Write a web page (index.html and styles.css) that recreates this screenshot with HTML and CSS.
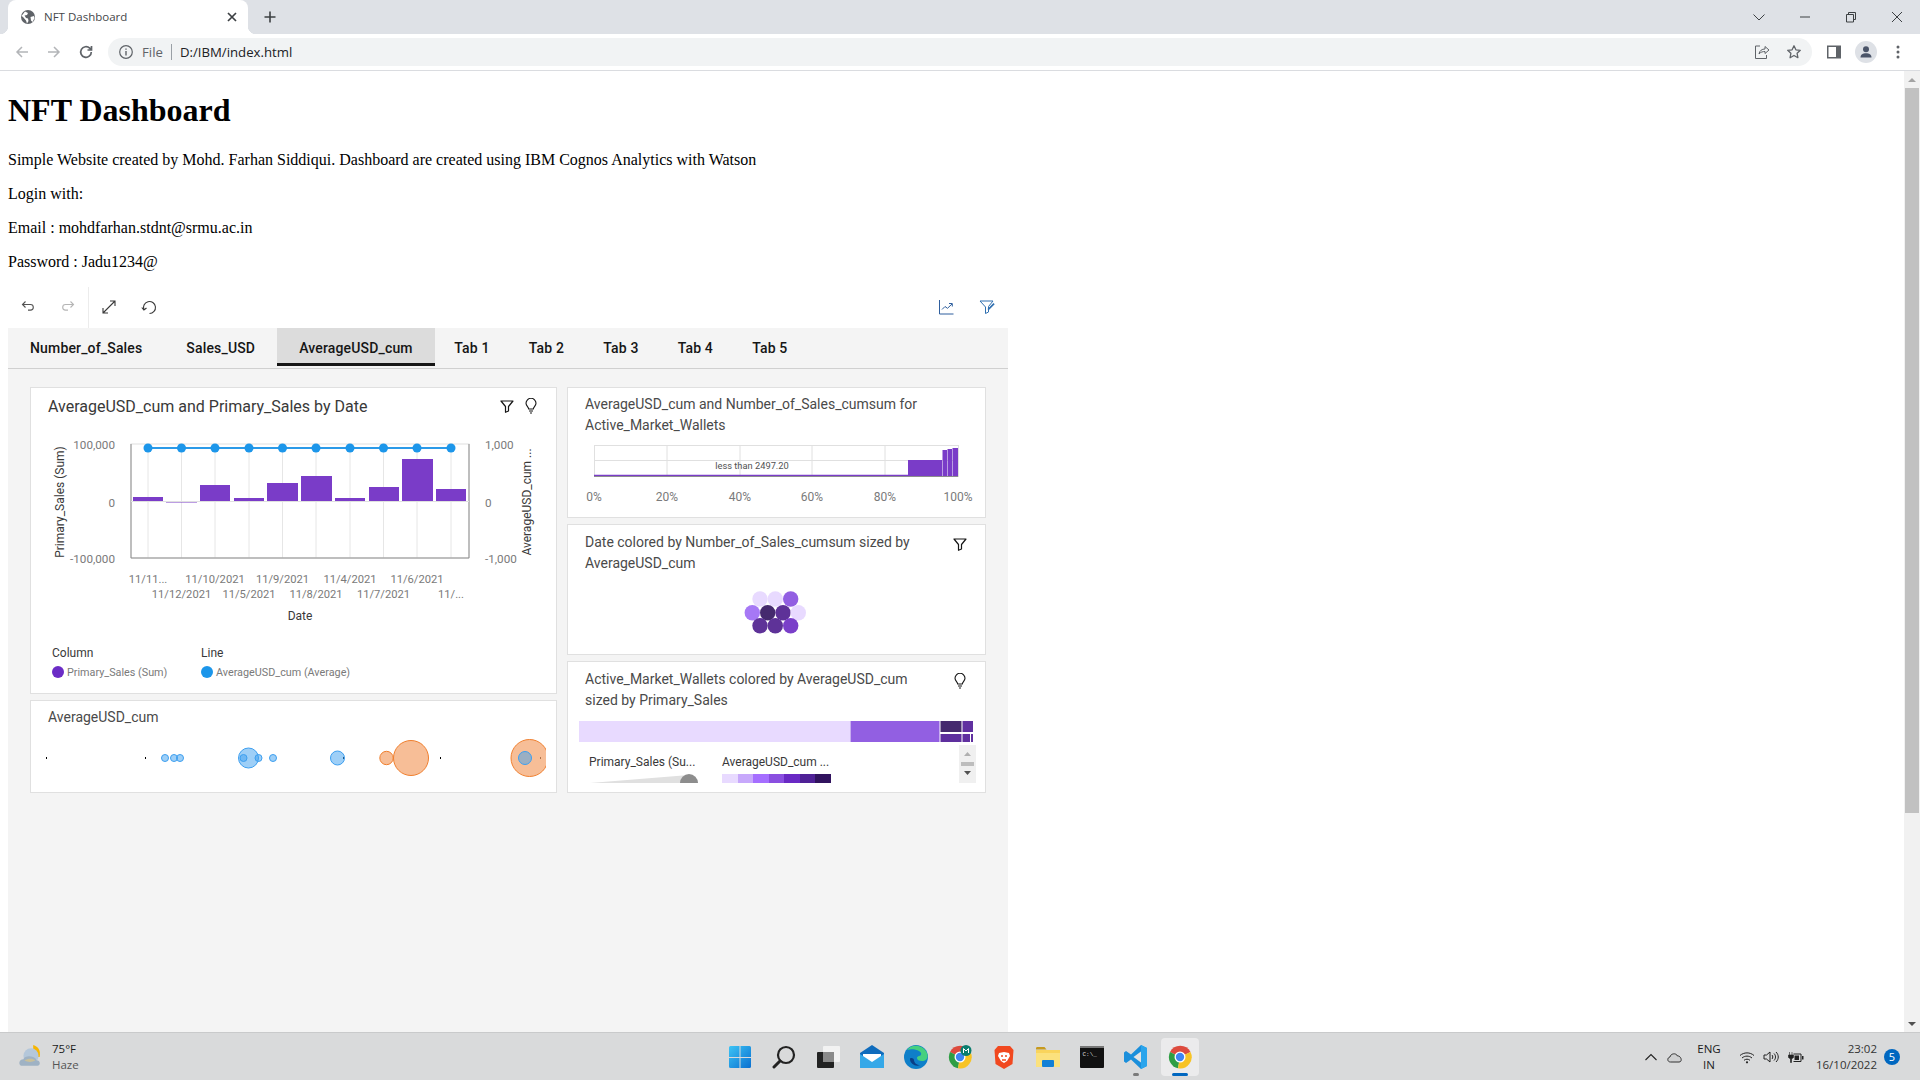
FILE: index.html
```html
<!DOCTYPE html>
<html lang="en">
<head>
    <meta charset="UTF-8">
    <meta name="viewport" content="width=device-width, initial-scale=1.0">
    <title>NFT Dashboard</title>
    <link rel="stylesheet" href="styles.css">
</head>
<body>
    <svg class="defs">
        <symbol id="i-funnel" viewBox="0 0 16 16"><path d="M2 3h12L9.500 8.500v4.500l-3 1.300V8.500z" fill="none" stroke="currentColor" stroke-width="1.200" stroke-linejoin="round"/></symbol>
        <symbol id="i-bulb" viewBox="0 0 16 16"><path d="M5.700 11c0-2-2.700-3-2.700-5.700a5 5 0 0 1 10 0c0 2.700-2.700 3.700-2.700 5.700zM6 13h4M7 15h2" fill="none" stroke="currentColor" stroke-width="1.100"/></symbol>
    </svg>

    <div id="browser">
        <div class="tabstrip">
            <div class="tab">
                <svg class="ic" viewBox="0 0 16 16"><circle cx="8" cy="8" r="7" fill="#5f6368"/><path d="M5 2.500 8 4 7 6 4.500 6.500 6 9l2 .5.500 2.500-1.500 2.500-1-3-3-3.500-1.500-1zM10.500 8l3.500-1 .5 2-2 4-1.500-1.500z" fill="#fff"/></svg>
                <span class="tab-title">NFT Dashboard</span>
                <svg class="ic tab-close" viewBox="0 0 16 16"><path d="M4 4l8 8M12 4l-8 8" stroke="#3c4043" stroke-width="1.700"/></svg>
            </div>
            <svg class="ic new-tab" viewBox="0 0 16 16"><path d="M8 2.500v11M2.500 8h11" stroke="#3c4043" stroke-width="1.600"/></svg>
            <div class="win-controls">
                <span class="win-btn"><svg class="ic" viewBox="0 0 16 16"><path d="M2.500 5.500 8 11l5.500-5.500" fill="none" stroke="#3c4043"/></svg></span>
                <span class="win-btn"><svg class="ic" viewBox="0 0 16 16"><path d="M3 8h10" stroke="#3c4043"/></svg></span>
                <span class="win-btn"><svg class="ic" viewBox="0 0 16 16"><path d="M3.500 5.500h7v7.500h-7zM5.500 5.500V3.500h7v7h-2" fill="none" stroke="#3c4043" stroke-linejoin="round"/></svg></span>
                <span class="win-btn"><svg class="ic" viewBox="0 0 16 16"><path d="M3 3l10 10M13 3 3 13" stroke="#3c4043"/></svg></span>
            </div>
        </div>

        <div class="toolbar">
            <span class="tool-btn"><svg class="ic" viewBox="0 0 16 16"><path d="M14 8H3M8 3 3 8l5 5" fill="none" stroke="#b3b5b8" stroke-width="1.500"/></svg></span>
            <span class="tool-btn"><svg class="ic" viewBox="0 0 16 16"><path d="M2 8h11M8 3l5 5-5 5" fill="none" stroke="#b3b5b8" stroke-width="1.500"/></svg></span>
            <span class="tool-btn"><svg class="ic" viewBox="0 0 16 16"><path d="M13.300 8a5.300 5.300 0 1 1-1.600-3.800L13.500 6M13.500 2v4h-4" fill="none" stroke="#5f6368" stroke-width="1.700"/></svg></span>
            <div class="omnibox">
                <svg class="ic" viewBox="0 0 16 16"><circle cx="8" cy="8" r="6.300" fill="none" stroke="#5f6368" stroke-width="1.200"/><path d="M8 7v4.500M8 4.500v1.300" stroke="#5f6368" stroke-width="1.400"/></svg>
                <span class="scheme">File</span>
                <span class="url">D:/IBM/index.html</span>
                <span class="omni-icons">
                    <span class="tool-btn"><svg class="ic" viewBox="0 0 16 16"><path d="M6 2H1.500v12.500h11V11M5 10c.5-3.500 3-5 6-5V2.500L15 6l-4 3.500V7.500C9 7.500 6.500 8 5 10z" fill="none" stroke="#5f6368"/></svg></span>
                    <span class="tool-btn"><svg class="ic" viewBox="0 0 16 16"><path d="M8 1.800l1.900 4 4.400.5-3.200 3 .8 4.400L8 11.500l-3.900 2.200.8-4.400-3.200-3 4.400-.5z" fill="none" stroke="#5f6368" stroke-width="1.300" stroke-linejoin="round"/></svg></span>
                </span>
            </div>
            <span class="tool-btn"><svg class="ic" viewBox="0 0 16 16"><path d="M1 1.500h14v13H1z" fill="#5f6368"/><path d="M2.500 3h7.500v10H2.500z" fill="#fff"/></svg></span>
            <span class="tool-btn"><span class="avatar"><svg class="ic" viewBox="0 0 16 16"><circle cx="8" cy="5.200" r="3" fill="#4a5468"/><path d="M2.500 13.500c0-3 2.500-4.300 5.500-4.300s5.500 1.300 5.500 4.300z" fill="#4a5468"/></svg></span></span>
            <span class="tool-btn"><svg class="ic" viewBox="0 0 16 16"><circle cx="8" cy="3" r="1.500" fill="#5f6368"/><circle cx="8" cy="8" r="1.500" fill="#5f6368"/><circle cx="8" cy="13" r="1.500" fill="#5f6368"/></svg></span>
        </div>

        <div class="viewport">
            <div class="page">
                <h1>NFT Dashboard</h1>
                <p>Simple Website created by Mohd. Farhan Siddiqui. Dashboard are created using IBM Cognos Analytics with Watson</p>
                <p>Login with:</p>
                <p>Email : mohdfarhan.stdnt@srmu.ac.in</p>
                <p>Password : Jadu1234@</p>

                <div class="dashboard">
                    <div class="dash-tools">
                        <div class="dash-group edit-group">
                            <span class="dash-btn"><svg class="ic" viewBox="0 0 16 16"><path d="M5.500 2.500 2.500 5.500l3 3M2.500 5.500h8a2.800 2.800 0 0 1 0 5.600H8" fill="none" stroke="#525252" stroke-width="1.100"/></svg></span>
                            <span class="dash-btn"><svg class="ic" viewBox="0 0 16 16"><path d="M10.500 2.500l3 3-3 3M13.500 5.500h-8a2.800 2.800 0 0 0 0 5.600H8" fill="none" stroke="#b5b5b5" stroke-width="1.100"/></svg></span>
                        </div>
                        <div class="dash-group">
                            <span class="dash-btn"><svg class="ic" viewBox="0 0 16 16"><path d="M2 14 14 2M9 2h5v5M2 9v5h5" fill="none" stroke="#393939" stroke-width="1.100"/></svg></span>
                            <span class="dash-btn"><svg class="ic" viewBox="0 0 16 16"><path d="M8.500 14.500a6 6 0 1 0-5.600-3.800M.8 8.500l2.100 2.500 2.600-2" fill="none" stroke="#393939" stroke-width="1.100"/></svg></span>
                        </div>
                        <div class="dash-group dash-right">
                            <span class="dash-btn wide"><svg class="ic" viewBox="0 0 16 16"><path d="M1.500 1v14h14M4 10.500l3-3 2.500 1.800L14 5M11 4.500h3.300v3" fill="none" stroke="#2f5f9e" stroke-width="1"/></svg></span>
                            <span class="dash-btn wide"><svg class="ic" viewBox="0 0 16 16"><path d="M1 2h13l-4.500 5.500v5.500l-3 1.500V8z" fill="none" stroke="#2f6fb0" stroke-width="1"/><path d="M9 9.500 14.500 4l1.200 1.200L10.200 10.700 8.800 11z" fill="#2f6fb0"/></svg></span>
                        </div>
                    </div>

                    <div class="dash-tabs">
                        <span class="dash-tab">Number_of_Sales</span>
                        <span class="dash-tab">Sales_USD</span>
                        <span class="dash-tab active">AverageUSD_cum</span>
                        <span class="dash-tab blank">Tab 1</span>
                        <span class="dash-tab blank">Tab 2</span>
                        <span class="dash-tab blank">Tab 3</span>
                        <span class="dash-tab blank">Tab 4</span>
                        <span class="dash-tab blank">Tab 5</span>
                    </div>

                    <div class="canvas">
                        <div class="col col-left">
                            <div class="card card-combo">
                                <div class="card-head big">
                                    <div class="card-title">AverageUSD_cum and Primary_Sales by Date</div>
                                    <div class="card-icons">
                                        <svg class="ic"><use href="#i-funnel"/></svg>
                                        <svg class="ic"><use href="#i-bulb"/></svg>
                                    </div>
                                </div>
                                <svg class="viz" width="524" height="262" viewBox="31 430 524 262">
                                    <rect x="131" y="444" width="338" height="114" fill="#fff" stroke="#e0e0e0"/>
                                    <g stroke="#e6e6e6">
                                        <path d="M148 444v114M181.500 444v114M215 444v114M249 444v114M282.500 444v114M316 444v114M350 444v114M383.500 444v114M417 444v114M451 444v114"/>
                                    </g>
                                    <path d="M131 444v114h338V444" fill="none" stroke="#8d8d8d"/>
                                    <g fill="#7a3cc8">
                                        <rect x="133" y="497" width="30" height="4"/>
                                        <rect x="166" y="501" width="31" height="1.500"/>
                                        <rect x="200" y="485" width="30" height="16"/>
                                        <rect x="234" y="498" width="30" height="3"/>
                                        <rect x="267" y="483" width="31" height="18"/>
                                        <rect x="301" y="476" width="31" height="25"/>
                                        <rect x="335" y="498" width="30" height="3"/>
                                        <rect x="369" y="487" width="30" height="14"/>
                                        <rect x="402" y="459" width="31" height="42"/>
                                        <rect x="436" y="489" width="30" height="12"/>
                                    </g>
                                    <path d="M131 501.500h338" stroke="#e0e0e0"/>
                                    <path d="M148 448H451" stroke="#2b9ae8" stroke-width="2"/>
                                    <g fill="#1c96ea">
                                        <circle cx="148" cy="448" r="4.500"/><circle cx="181.500" cy="448" r="4.500"/><circle cx="215" cy="448" r="4.500"/><circle cx="249" cy="448" r="4.500"/><circle cx="282.500" cy="448" r="4.500"/><circle cx="316" cy="448" r="4.500"/><circle cx="350" cy="448" r="4.500"/><circle cx="383.500" cy="448" r="4.500"/><circle cx="417" cy="448" r="4.500"/><circle cx="451" cy="448" r="4.500"/>
                                    </g>
                                    <g class="tick value end">
                                        <text x="115" y="449">100,000</text>
                                        <text x="115" y="507">0</text>
                                        <text x="115" y="563">-100,000</text>
                                    </g>
                                    <g class="tick value">
                                        <text x="485" y="449">1,000</text>
                                        <text x="485" y="507">0</text>
                                        <text x="485" y="563">-1,000</text>
                                    </g>
                                    <g class="tick date mid">
                                        <text x="148" y="583">11/11...</text>
                                        <text x="215" y="583">11/10/2021</text>
                                        <text x="282.500" y="583">11/9/2021</text>
                                        <text x="350" y="583">11/4/2021</text>
                                        <text x="417" y="583">11/6/2021</text>
                                        <text x="181.500" y="598">11/12/2021</text>
                                        <text x="249" y="598">11/5/2021</text>
                                        <text x="316" y="598">11/8/2021</text>
                                        <text x="383.500" y="598">11/7/2021</text>
                                        <text x="451" y="598">11/...</text>
                                    </g>
                                    <g class="axis-title">
                                        <text x="300" y="620" text-anchor="middle">Date</text>
                                        <text transform="translate(64 502) rotate(-90)" text-anchor="middle">Primary_Sales (Sum)</text>
                                        <text transform="translate(531 502) rotate(-90)" text-anchor="middle">AverageUSD_cum ...</text>
                                        <text x="52" y="657">Column</text>
                                        <text x="201" y="657">Line</text>
                                    </g>
                                    <circle cx="58" cy="672" r="6" fill="#6b2cc6"/>
                                    <circle cx="207" cy="672" r="6" fill="#1c96ea"/>
                                    <g class="legend-text">
                                        <text x="67" y="676">Primary_Sales (Sum)</text>
                                        <text x="216" y="676">AverageUSD_cum (Average)</text>
                                    </g>
                                </svg>
                            </div>

                            <div class="card card-packed">
                                <div class="card-head raised">
                                    <div class="card-title">AverageUSD_cum</div>
                                </div>
                                <svg class="viz" width="515" height="62" viewBox="31 730 515 62">
                                    <g fill="#000">
                                        <rect x="46" y="757" width="1" height="2"/><rect x="145" y="757" width="1" height="2"/><rect x="440" y="757" width="1" height="2"/><rect x="540" y="757" width="1" height="2"/><rect x="343" y="757" width="1" height="2"/>
                                    </g>
                                    <g fill="#3d9ff0" fill-opacity=".5" stroke="#3d9ff0" stroke-width="1">
                                        <circle cx="165" cy="758" r="3.500"/><circle cx="174" cy="758" r="3.500"/><circle cx="180" cy="758" r="3.500"/>
                                        <circle cx="248.500" cy="758" r="10"/><circle cx="243.500" cy="758" r="3.500"/><circle cx="258.500" cy="758" r="3.500"/>
                                        <circle cx="273" cy="758" r="3.500"/><circle cx="337.500" cy="758" r="7"/>
                                    </g>
                                    <g fill="#f4a36b" fill-opacity=".7" stroke="#f07f2e" stroke-width="1">
                                        <circle cx="386.500" cy="758" r="6.700"/><circle cx="411" cy="758" r="17.500"/><circle cx="529.500" cy="758" r="18.500"/>
                                    </g>
                                    <circle cx="525" cy="758" r="6.500" fill="#3d9ff0" fill-opacity=".5" stroke="#3d9ff0"/>
                                </svg>
                            </div>
                        </div>

                        <div class="col col-right">
                            <div class="card card-marimekko">
                                <div class="card-head raised">
                                    <div class="card-title">AverageUSD_cum and Number_of_Sales_cumsum for<br>Active_Market_Wallets</div>
                                </div>
                                <svg class="viz" width="416" height="79" viewBox="568 438 416 79">
                                    <rect x="594.500" y="445.500" width="364" height="31" fill="#fff" stroke="#e0e0e0"/>
                                    <path d="M594 460.500h364M667 445v31M740 445v31M812 445v31M885 445v31" stroke="#e0e0e0"/>
                                    <path d="M594 475.500h314" stroke="#7a3cc8" stroke-width="1.500"/>
                                    <g fill="#7a3cc8">
                                        <rect x="908" y="460" width="34" height="16"/>
                                        <rect x="942.500" y="450" width="4.500" height="26"/>
                                        <rect x="947.500" y="449" width="4.500" height="27"/>
                                        <rect x="952.500" y="448" width="5.500" height="28"/>
                                    </g>
                                    <path d="M594 476.500h364" stroke="#8d8d8d"/>
                                    <text class="mini" x="752" y="468.500" text-anchor="middle">less than 2497.20</text>
                                    <g class="tick mid">
                                        <text x="594" y="501">0%</text><text x="667" y="501">20%</text><text x="740" y="501">40%</text><text x="812" y="501">60%</text><text x="885" y="501">80%</text><text x="958" y="501">100%</text>
                                    </g>
                                </svg>
                            </div>

                            <div class="card card-cloud">
                                <div class="card-head">
                                    <div class="card-title">Date colored by Number_of_Sales_cumsum sized by<br>AverageUSD_cum</div>
                                    <div class="card-icons">
                                        <svg class="ic"><use href="#i-funnel"/></svg>
                                    </div>
                                </div>
                                <svg class="viz" width="416" height="78" viewBox="568 575 416 78">
                                    <circle cx="760" cy="599" r="7.700" fill="#e8daff"/><circle cx="775.300" cy="599" r="7.700" fill="#e8daff"/><circle cx="790.700" cy="599" r="7.700" fill="#925fe2"/>
                                    <circle cx="752.300" cy="612.700" r="7.700" fill="#a678f5"/><circle cx="767.700" cy="612.700" r="7.700" fill="#452a6e"/><circle cx="783" cy="612.700" r="7.700" fill="#5e3298"/><circle cx="798.300" cy="612.700" r="7.700" fill="#e8daff"/>
                                    <circle cx="760" cy="625.700" r="7.700" fill="#5e3298"/><circle cx="775.300" cy="625.700" r="7.700" fill="#5e3298"/><circle cx="790.700" cy="625.700" r="7.700" fill="#7a3fc9"/>
                                </svg>
                            </div>

                            <div class="card card-treemap">
                                <div class="card-head">
                                    <div class="card-title">Active_Market_Wallets colored by AverageUSD_cum<br>sized by Primary_Sales</div>
                                    <div class="card-icons">
                                        <svg class="ic"><use href="#i-bulb"/></svg>
                                    </div>
                                </div>
                                <svg class="viz" width="416" height="79" viewBox="568 712 416 79">
                                    <rect x="579" y="721" width="271" height="21" fill="#e8daff"/>
                                    <rect x="850.500" y="721" width="89" height="21" fill="#925fe2"/>
                                    <rect x="940.500" y="721" width="21" height="11" fill="#452a6e"/>
                                    <rect x="940.500" y="734" width="21" height="8" fill="#5e2f9e"/>
                                    <rect x="962.500" y="721" width="10.500" height="11" fill="#6030a0"/>
                                    <rect x="962.500" y="734" width="7.500" height="8" fill="#6030a0"/>
                                    <rect x="971" y="734" width="2" height="8" fill="#6030a0"/>
                                    <g class="axis-title">
                                        <text x="589" y="766">Primary_Sales (Su...</text>
                                        <text x="722" y="766">AverageUSD_cum ...</text>
                                    </g>
                                    <path d="M590 783 689 775v8z" fill="#e0e0e0"/>
                                    <path d="M680 783a9 9 0 0 1 18 0z" fill="#8d8d8d"/>
                                    <g>
                                        <rect x="722" y="774" width="16" height="9" fill="#e8daff"/>
                                        <rect x="738" y="774" width="15.500" height="9" fill="#c7a8fb"/>
                                        <rect x="753" y="774" width="16" height="9" fill="#a56eff"/>
                                        <rect x="769" y="774" width="15.500" height="9" fill="#8a4fe0"/>
                                        <rect x="784" y="774" width="16" height="9" fill="#6929c4"/>
                                        <rect x="800" y="774" width="15.500" height="9" fill="#4f2196"/>
                                        <rect x="815" y="774" width="16" height="9" fill="#31135e"/>
                                    </g>
                                    <rect x="959" y="745" width="17" height="38" fill="#f0f0f0"/>
                                    <path d="M967.500 752l3.500 4h-7z" fill="#b0b0b0"/>
                                    <rect x="961" y="762" width="13" height="4" fill="#bdbdbd"/>
                                    <path d="M964 771h7l-3.500 4z" fill="#525252"/>
                                </svg>
                            </div>
                        </div>
                    </div>
                </div>
            </div>

            <div class="scrollbar">
                <span class="sb-btn"><span class="arrow-up"></span></span>
                <div class="sb-thumb"></div>
                <span class="sb-btn sb-down"><span class="arrow-down"></span></span>
            </div>
        </div>

        <div class="taskbar">
            <div class="weather">
                <svg width="26" height="26" viewBox="0 0 24 24">
                    <path d="M14 1c5 1.500 7 5 6 11l-6 0z" fill="#f7b500"/>
                    <circle cx="12" cy="11" r="7" fill="#b4c7da"/>
                    <path d="M3 20c-3-1-2-6 2-6 1-3 6-3 9-2 2 1 3 2 3 3 4 0 4 5 1 5z" fill="#9fb2c4"/>
                    <path d="M6 15c3-2 8-2 10 0-3 2-7 2-10 0z" fill="#c9c09a"/>
                </svg>
                <div class="weather-text">
                    <div class="temp">75°F</div>
                    <div class="haze">Haze</div>
                </div>
            </div>

            <div class="task-icons">
                <span class="task-icon">
                    <svg width="24" height="24" viewBox="0 0 24 24">
                        <defs><linearGradient id="g-win" x1="0" y1="0" x2="1" y2="1"><stop offset="0" stop-color="#3cc4f5"/><stop offset="1" stop-color="#0a6fd0"/></linearGradient></defs>
                        <path d="M1 2.500a1.500 1.500 0 0 1 1.500-1.500h9v11H1zM12.500 1h9A1.500 1.500 0 0 1 23 2.500V12H12.500zM1 13h10.500v10h-9A1.500 1.500 0 0 1 1 21.500zM12.500 13H23v8.500a1.500 1.500 0 0 1-1.500 1.500h-9z" fill="url(#g-win)"/>
                    </svg>
                </span>
                <span class="task-icon">
                    <svg width="24" height="24" viewBox="0 0 24 24"><circle cx="14" cy="10" r="8" fill="none" stroke="#222" stroke-width="2.200"/><path d="M8 16l-6 6" stroke="#222" stroke-width="3" stroke-linecap="round"/></svg>
                </span>
                <span class="task-icon">
                    <svg width="24" height="24" viewBox="0 0 24 24"><rect x="1" y="7" width="17" height="16" rx="1" fill="#222"/><rect x="7" y="1" width="17" height="16" rx="1" fill="#f4f4f4" fill-opacity=".9"/><rect x="7" y="7" width="11" height="10" fill="#8a8a8a"/></svg>
                </span>
                <span class="task-icon">
                    <svg width="24" height="24" viewBox="0 0 24 24"><path d="M0 8 12 0l12 8v15H0z" fill="#0f6cbd"/><path d="M3 9h18v8H3z" fill="#fff"/><path d="M0 9l12 8 12-8v14H0z" fill="#35a8e8"/></svg>
                </span>
                <span class="task-icon">
                    <svg width="24" height="24" viewBox="0 0 24 24">
                        <circle cx="12" cy="12" r="12" fill="#0f7fc9"/>
                        <path d="M3 5C7-1 19-1 23 8c2 5-1 8-5 8-3 0-5-1-5-3 0-3 5-1 4-5-1-3-9-5-14-3z" fill="#45d07f"/>
                        <path d="M6 14c0 5 6 8 10 6-3 0-6-2-6-5 0-2-4-3-4-1z" fill="#0a3e86"/>
                    </svg>
                </span>
                <span class="task-icon">
                    <svg width="24" height="24" viewBox="0 0 24 24">
                        <path d="M12 12 2 7A11.500 11.500 0 0 1 22.500 7z" fill="#dd4b3e"/>
                        <path d="M12 12 2 7a11.500 11.500 0 0 0 8 16.300z" fill="#2f9e44"/>
                        <path d="M12 12 22.500 7A11.500 11.500 0 0 1 10 23.300z" fill="#f7c325"/>
                        <circle cx="12" cy="12" r="5.500" fill="#fff"/><circle cx="12" cy="12" r="4.200" fill="#3f85f3"/>
                        <circle cx="18" cy="5.500" r="5.500" fill="#0b7d6e"/><path d="M15.500 8V3.500l2.500 2.500 2.500-2.500V8" fill="none" stroke="#fff"/>
                    </svg>
                </span>
                <span class="task-icon">
                    <svg width="24" height="24" viewBox="0 0 24 24">
                        <path d="M6 1h12l3.500 4-1 14L12 24 3.500 19l-1-14z" fill="#f1481f"/>
                        <path d="M7 8l5-1 5 1 1 3-3 5-3 2-3-2-3-5z" fill="#fff"/>
                        <path d="M9 11h2M13 11h2M10 15h4" stroke="#f1481f" stroke-width="1.300"/>
                    </svg>
                </span>
                <span class="task-icon">
                    <svg width="24" height="24" viewBox="0 0 24 24"><path d="M0 3.500C0 2.500.5 2 1.500 2h7l2 2.500H0z" fill="#c79a1e"/><path d="M0 5h24v17H0z" fill="#f9d45c"/><path d="M0 8h24v14H0z" fill="#fbe17d"/><rect x="6" y="15" width="12" height="7" rx="1" fill="#1280d6"/></svg>
                </span>
                <span class="task-icon">
                    <svg width="24" height="24" viewBox="0 0 24 24"><rect x="0" y="1" width="24" height="22" rx="1" fill="#111"/><rect x="0" y="1" width="24" height="2" fill="#777"/><text class="term-text" x="2.500" y="11">C:\_</text></svg>
                </span>
                <span class="task-icon code-open">
                    <svg width="24" height="24" viewBox="0 0 24 24"><path d="M17 0l6 3v18l-6 3-10-9.500L2 18l-2-1.500V7.500L2 6l5 3.500z" fill="#1b8fdb"/><path d="M17 6.500 9.500 12l7.500 5.500z" fill="#e2e3e4"/><path d="M17 0l6 3v18l-6 3z" fill="#2ba5ec"/></svg>
                </span>
                <span class="task-icon current">
                    <svg width="24" height="24" viewBox="0 0 24 24">
                        <path d="M12 12 2 7A11.500 11.500 0 0 1 22.500 7z" fill="#dd4b3e"/>
                        <path d="M12 12 2 7a11.500 11.500 0 0 0 8 16.300z" fill="#2f9e44"/>
                        <path d="M12 12 22.500 7A11.500 11.500 0 0 1 10 23.300z" fill="#f7c325"/>
                        <circle cx="12" cy="12" r="5.500" fill="#fff"/><circle cx="12" cy="12" r="4.200" fill="#3f85f3"/>
                    </svg>
                </span>
            </div>

            <div class="tray">
                <svg class="ic chevron" viewBox="0 0 16 16"><path d="M2.500 11 8 5.500l5.500 5.500" fill="none" stroke="#222" stroke-width="1.100"/></svg>
                <svg class="ic cloud" viewBox="0 0 16 16"><path d="M3.500 13C0 13 0 8.500 3 8c.5-3.500 6-4.500 7.500-1 3.500-.5 5.500 6 1.500 6z" fill="#cfd0d1" stroke="#333"/></svg>
                <div class="lang">ENG<br>IN</div>
                <svg class="ic wifi" viewBox="0 0 16 16"><path d="M1 6.500c4-3.500 10-3.500 14 0M3 9c3-2.500 7-2.500 10 0M5 11.300c2-1.500 4-1.500 6 0" fill="none" stroke="#222"/><circle cx="8" cy="13.300" r="1.100" fill="#222"/></svg>
                <svg class="ic vol" viewBox="0 0 16 16"><path d="M1 6v4h2.500L7 13V3L3.500 6z" fill="none" stroke="#222"/><path d="M9 6c1 1 1 3 0 4M11 4.500c2 2 2 5 0 7M13 3c3 3 3 7 0 10" fill="none" stroke="#222"/></svg>
                <svg class="ic batt" viewBox="0 0 16 16"><path d="M5.500 5H13v7.500H5.500" fill="none" stroke="#222"/><path d="M6.500 6.500H11V11H6.500zM14 7h1.500v3.500H14z" fill="#222"/><path d="M.5 6h5v2.500L3.500 10v3.500H2.500V10L.5 8.500zM1.500 3v3M4 3v3" fill="#222" stroke="#222" stroke-width=".6"/></svg>
                <div class="clock">23:02<br>16/10/2022</div>
                <span class="badge">5</span>
            </div>
        </div>
    </div>
</body>
</html>
```

FILE: styles.css
```css
html, body {
    margin: 0;
    padding: 0;
    height: 100%;
    overflow: hidden;
}
body {
    font-family: "Liberation Serif", serif;
    background-color: #fff;
    color: #000;
}
.defs {
    display: none;
}
.ic {
    width: 16px;
    height: 16px;
    display: block;
    flex: none;
}
#browser {
    height: 100vh;
    display: flex;
    flex-direction: column;
}

/* browser chrome */
.tabstrip {
    height: 34px;
    flex: none;
    display: flex;
    align-items: center;
    background-color: #dee1e6;
}
.tab {
    position: relative;
    width: 240px;
    height: 34px;
    box-sizing: border-box;
    margin-left: 8px;
    padding: 0 8px 0 12px;
    display: flex;
    align-items: center;
    gap: 8px;
    background-color: #fff;
    border-radius: 8px 8px 0 0;
    font-family: "Open Sans", sans-serif;
    font-size: 11.500px;
    color: #45474a;
}
.tab::before, .tab::after {
    content: "";
    position: absolute;
    bottom: 0;
    width: 8px;
    height: 8px;
}
.tab::before {
    left: -8px;
    background: radial-gradient(circle at 0 0, #dee1e6 8px, #fff 8.5px);
}
.tab::after {
    right: -8px;
    background: radial-gradient(circle at 100% 0, #dee1e6 8px, #fff 8.5px);
}
.tab-title {
    flex: 1;
    line-height: 14px;
    padding-bottom: 1px;
}
.new-tab {
    margin-left: 14px;
}
.win-controls {
    margin-left: auto;
    display: flex;
}
.win-btn {
    width: 46px;
    height: 28px;
    display: flex;
    align-items: center;
    justify-content: center;
}
.toolbar {
    height: 36px;
    flex: none;
    padding: 0 6px;
    display: flex;
    align-items: center;
    background-color: #fff;
    border-bottom: 1px solid #dadce0;
}
.tool-btn {
    width: 32px;
    height: 28px;
    flex: none;
    display: flex;
    align-items: center;
    justify-content: center;
}
.omnibox {
    flex: 1;
    height: 28px;
    margin: 0 6px;
    padding: 0 2px 0 10px;
    display: flex;
    align-items: center;
    background-color: #f1f3f4;
    border-radius: 14px;
    font-family: "Open Sans", sans-serif;
    font-size: 13.200px;
    color: #202124;
}
.scheme {
    margin-left: 8px;
    padding-right: 8px;
    color: #5f6368;
    border-right: 1px solid #9aa0a6;
    line-height: 16px;
}
.url {
    margin-left: 8px;
}
.omni-icons {
    margin-left: auto;
    display: flex;
}
.avatar {
    width: 22px;
    height: 22px;
    border-radius: 50%;
    background-color: #dee1e6;
    display: flex;
    align-items: center;
    justify-content: center;
}

/* page */
.viewport {
    flex: 1;
    min-height: 0;
    display: flex;
}
.page {
    flex: 1;
    min-width: 0;
    padding: 0 8px;
    overflow: hidden;
}
h1 {
    font-size: 32px;
    font-weight: bold;
    margin: 21.44px 0;
}
p {
    font-size: 16px;
    margin: 16px 0;
}
.scrollbar {
    width: 16px;
    flex: none;
    display: flex;
    flex-direction: column;
    background-color: #f1f1f1;
}
.sb-btn {
    height: 17px;
    flex: none;
    display: flex;
    align-items: center;
    justify-content: center;
}
.sb-down {
    margin-top: auto;
}
.arrow-up {
    border-left: 4px solid transparent;
    border-right: 4px solid transparent;
    border-bottom: 4px solid #a3a3a3;
}
.arrow-down {
    border-left: 4px solid transparent;
    border-right: 4px solid transparent;
    border-top: 4px solid #505050;
}
.sb-thumb {
    height: 725px;
    margin: 0 1px;
    background-color: #c1c1c1;
}

/* dashboard */
.dashboard {
    width: 1000px;
    height: 800px;
    font-family: Roboto, sans-serif;
    background-color: #f4f4f4;
}
.dash-tools {
    height: 41px;
    display: flex;
    background-color: #fff;
}
.dash-group {
    display: flex;
}
.edit-group {
    border-right: 1px solid #ececec;
}
.dash-right {
    margin-left: auto;
    padding-right: 1px;
}
.dash-btn {
    width: 40px;
    display: flex;
    align-items: center;
    justify-content: center;
}
.dash-btn.wide {
    width: 41px;
}
.dash-tabs {
    height: 40px;
    display: flex;
    border-bottom: 1px solid #d0d0d0;
}
.dash-tab {
    height: 38px;
    box-sizing: border-box;
    padding: 2px 22px 0;
    display: flex;
    align-items: center;
    font-size: 14px;
    font-weight: 500;
    letter-spacing: 0.16px;
    color: #161616;
}
.dash-tab.blank {
    padding: 2px 19.6px 0;
}
.dash-tab.active {
    background-color: #dcdcdc;
    box-shadow: inset 0 -3px 0 #161616;
}
.canvas {
    padding: 18px 22px 0;
    display: flex;
    gap: 10px;
    align-items: flex-start;
}
.col {
    display: flex;
    flex-direction: column;
}
.col-left {
    width: 527px;
    gap: 6px;
}
.col-right {
    width: 419px;
    gap: 6px;
}
.card {
    box-sizing: border-box;
    background-color: #fff;
    border: 1px solid #e0e0e0;
}
.card-combo {
    height: 307px;
}
.card-packed {
    height: 93px;
}
.card-marimekko, .card-cloud {
    height: 131px;
}
.card-treemap {
    height: 132px;
}
.card-head {
    box-sizing: border-box;
    padding: 7px 17px 1px 17px;
    display: flex;
    justify-content: space-between;
}
.card-head.raised {
    padding: 6px 17px 2px 17px;
}
.card-head.big {
    padding-top: 8px;
    height: 42px;
}
.card-title {
    font-size: 14px;
    line-height: 21px;
    color: #4a4a4a;
}
.big .card-title {
    font-size: 16px;
    color: #393939;
}
.card-icons {
    display: flex;
    gap: 8px;
    margin-top: 4px;
    color: #161616;
}
.big .card-icons {
    margin-top: 2px;
}
.viz {
    display: block;
}
.tick text {
    font-size: 12px;
    fill: #7a7a7a;
}
.tick.value text {
    font-size: 11.700px;
}
.tick.date text {
    font-size: 11.200px;
}
.tick.end text {
    text-anchor: end;
}
.tick.mid text {
    text-anchor: middle;
}
.axis-title text {
    font-size: 12px;
    fill: #393939;
}
.legend-text text {
    font-size: 10.800px;
    fill: #7a7a7a;
}
.mini {
    font-size: 9.300px;
    fill: #525252;
}

/* windows taskbar */
.taskbar {
    height: 47px;
    flex: none;
    display: grid;
    grid-template-columns: 1fr auto 1fr;
    align-items: center;
    background-color: #d9dadb;
    border-top: 1px solid #c9cacb;
    font-family: "Open Sans", sans-serif;
    font-size: 11.500px;
    color: #1c1c1c;
}
.weather {
    padding-left: 18px;
    display: flex;
    align-items: center;
    gap: 8px;
}
.weather-text {
    line-height: 16px;
}
.haze {
    color: #555;
}
.task-icons {
    display: flex;
}
.task-icon {
    position: relative;
    width: 44px;
    height: 38px;
    display: flex;
    align-items: center;
    justify-content: center;
}
.task-icon.current {
    width: 38px;
    margin: 0 3px;
    background-color: #ebebec;
    border-radius: 4px;
}
.task-icon.current::after, .task-icon.code-open::after {
    content: "";
    position: absolute;
    bottom: 0;
    height: 3px;
    border-radius: 2px;
}
.task-icon.current::after {
    width: 16px;
    background-color: #0067c0;
}
.task-icon.code-open::after {
    width: 6px;
    background-color: #7a7a7a;
}
.term-text {
    font-family: "Liberation Mono", monospace;
    font-size: 6px;
    fill: #ddd;
}
.tray {
    justify-self: end;
    display: flex;
    align-items: center;
    padding-right: 20px;
}
.cloud {
    margin-left: 8px;
}
.lang {
    width: 52px;
    margin-right: 4px;
    text-align: center;
    line-height: 16px;
}
.vol {
    margin-left: 8px;
}
.batt {
    margin-left: 9px;
}
.clock {
    width: 70px;
    margin-left: 3px;
    text-align: right;
    line-height: 16px;
    color: #333;
}
.badge {
    width: 16px;
    height: 16px;
    margin-left: 7px;
    border-radius: 50%;
    background-color: #0067c0;
    color: #fff;
    font-size: 11px;
    line-height: 16px;
    text-align: center;
}
```
